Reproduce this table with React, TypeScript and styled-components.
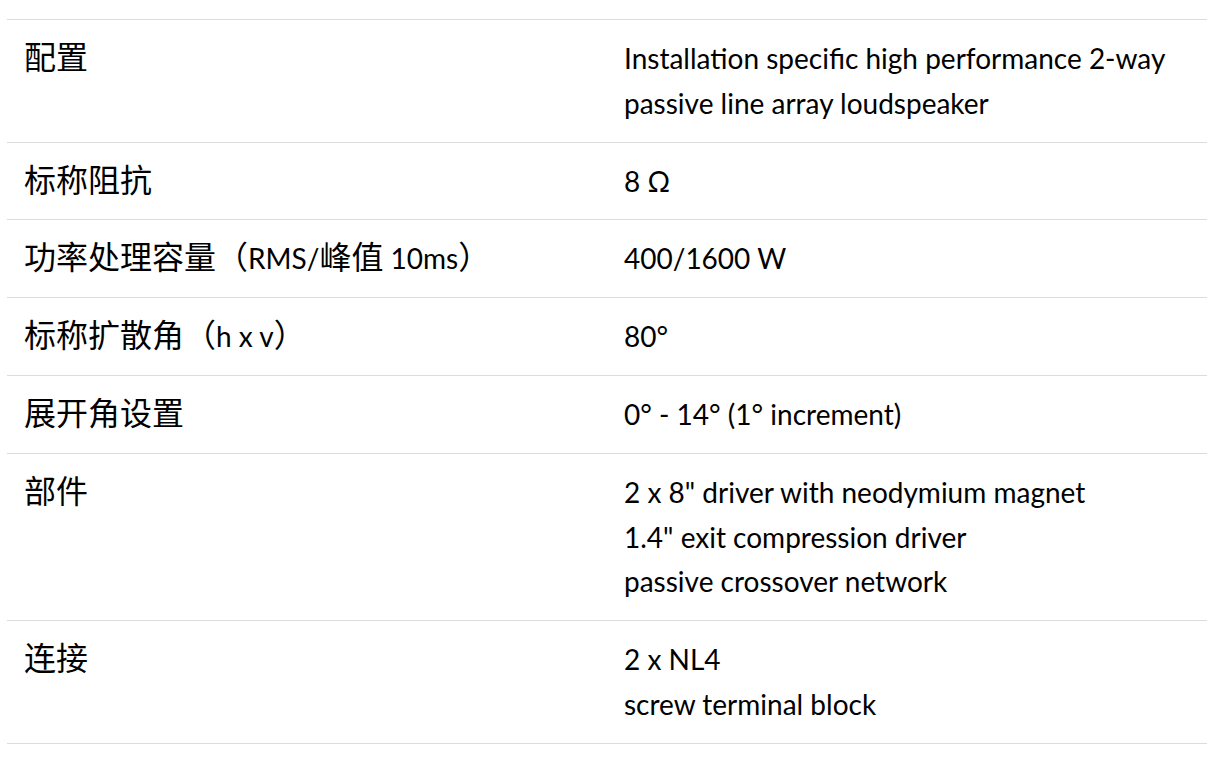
import React from "react";
import styled, { createGlobalStyle } from "styled-components";

const GlobalStyle = createGlobalStyle`
  html, body {
    margin: 0;
    padding: 0;
    background: #ffffff;
  }
  body {
    font-family: Lato, "Noto Sans CJK SC", sans-serif;
    color: #000000;
  }
`;

const Page = styled.div`
  padding: 19px 19px 32px 7px;
`;

const SpecTable = styled.div`
  width: 1200px;
  border-bottom: 1px solid #dcdcdc;
`;

const Row = styled.div`
  display: grid;
  grid-template-columns: 600px 600px;
  border-top: 1px solid #dcdcdc;
`;

const Cell = styled.div`
  padding: 16px 16px 16px 17px;
  font-size: 28px;
  line-height: 44.8px;
`;

const Line = styled.div`
  white-space: nowrap;
`;

// Chinese glyphs run a little larger than the Latin text in the reference
const Han = styled.span`
  font-family: "Noto Sans CJK SC", sans-serif;
  font-size: 32px;
  line-height: 1;
`;

type Spec = { label: string; value: string[] };

const specs: Spec[] = [
  {
    label: "配置",
    value: [
      "Installation specific high performance 2-way",
      "passive line array loudspeaker",
    ],
  },
  { label: "标称阻抗", value: ["8 Ω"] },
  { label: "功率处理容量（RMS/峰值 10ms）", value: ["400/1600 W"] },
  { label: "标称扩散角（h x v）", value: ["80°"] },
  { label: "展开角设置", value: ["0° - 14° (1° increment)"] },
  {
    label: "部件",
    value: [
      '2 x 8" driver with neodymium magnet',
      '1.4" exit compression driver',
      "passive crossover network",
    ],
  },
  { label: "连接", value: ["2 x NL4", "screw terminal block"] },
];

const hanRun = /([\u3000-\u9fff\uff00-\uffef]+)/;

const Label = ({ text }: { text: string }) => (
  <>
    {text
      .split(hanRun)
      .filter(Boolean)
      .map((part, i) =>
        hanRun.test(part) ? <Han key={i}>{part}</Han> : <span key={i}>{part}</span>
      )}
  </>
);

export default function App() {
  return (
    <>
      <GlobalStyle />
      <Page>
        <SpecTable>
          {specs.map((s) => (
            <Row key={s.label}>
              <Cell>
                <Label text={s.label} />
              </Cell>
              <Cell>
                {s.value.map((v) => (
                  <Line key={v}>{v}</Line>
                ))}
              </Cell>
            </Row>
          ))}
        </SpecTable>
      </Page>
    </>
  );
}
